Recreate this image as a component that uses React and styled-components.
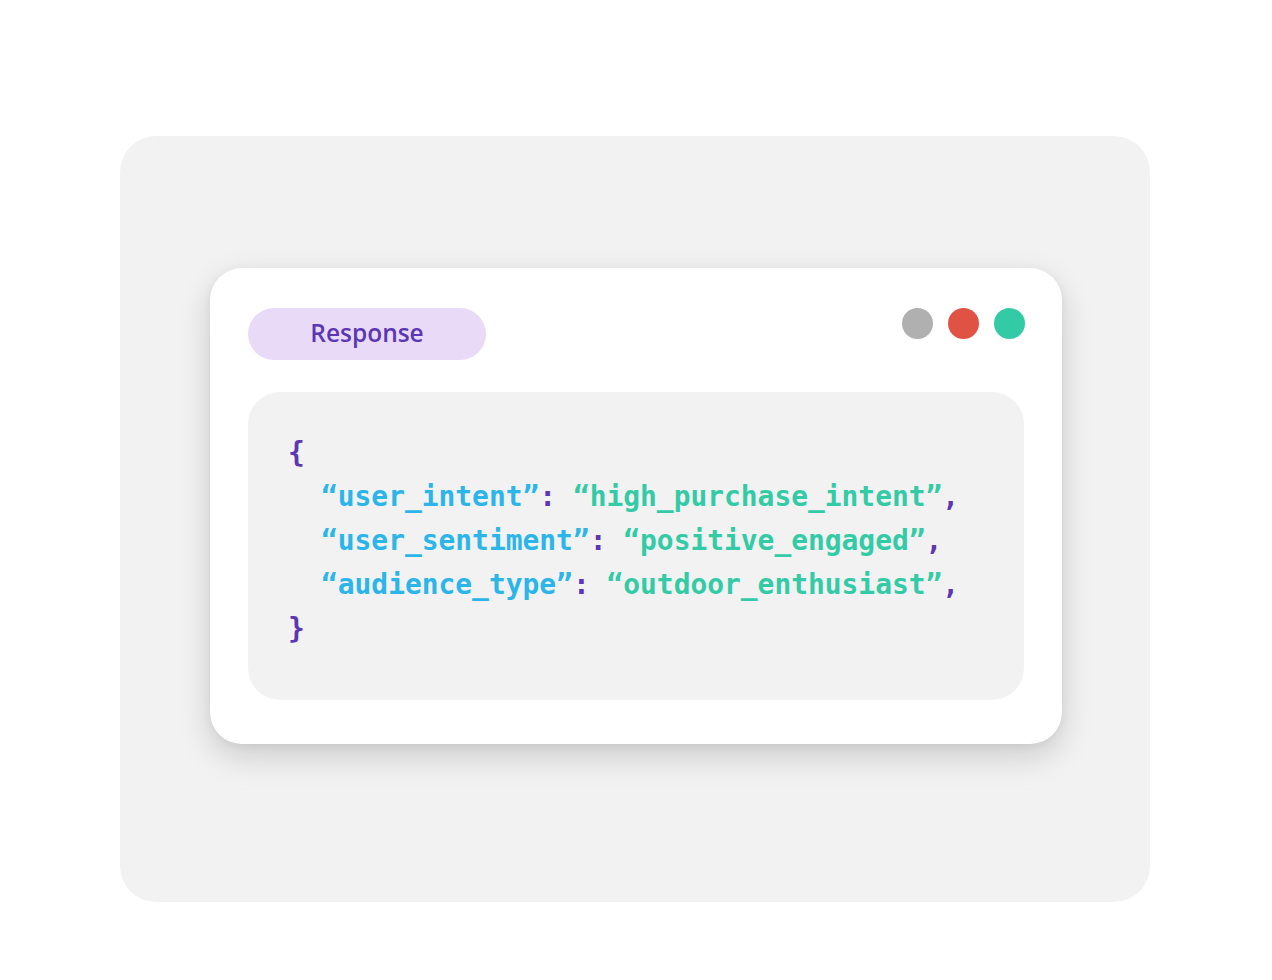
import styled, { createGlobalStyle } from "styled-components";

const GlobalStyle = createGlobalStyle`
  html, body {
    margin: 0;
    padding: 0;
    background: #ffffff;
  }
  * {
    box-sizing: border-box;
  }
`;

const lines = [
  { key: "user_intent", value: "high_purchase_intent" },
  { key: "user_sentiment", value: "positive_engaged" },
  { key: "audience_type", value: "outdoor_enthusiast" },
];

export default function App() {
  return (
    <>
      <GlobalStyle />
      <Page>
        <Panel>
          <Card>
            <Header>
              <Pill>Response</Pill>
              <Dots>
                <Dot color="#b0b0b0" />
                <Dot color="#e05344" />
                <Dot color="#33cba6" />
              </Dots>
            </Header>
            <CodeBox>
              <Line>
                <Punct>{"{"}</Punct>
              </Line>
              {lines.map((l) => (
                <Line key={l.key} indent>
                  <Key>{`“${l.key}”`}</Key>
                  <Punct>: </Punct>
                  <Value>{`“${l.value}”`}</Value>
                  <Punct>,</Punct>
                </Line>
              ))}
              <Line>
                <Punct>{"}"}</Punct>
              </Line>
            </CodeBox>
          </Card>
        </Panel>
      </Page>
    </>
  );
}

const Page = styled.div`
  width: 1272px;
  height: 980px;
  padding: 136px 122px 78px 120px;
`;

const Panel = styled.div`
  width: 1030px;
  height: 766px;
  background: #f2f2f2;
  border-radius: 36px;
  padding: 132px 88px 0 90px;
`;

const Card = styled.div`
  width: 852px;
  height: 476px;
  background: #ffffff;
  border-radius: 32px;
  padding: 40px 38px 44px 38px;
  box-shadow: 0 12px 32px rgba(0, 0, 0, 0.16), 0 2px 8px rgba(0, 0, 0, 0.05);
  display: flex;
  flex-direction: column;
  gap: 32px;
`;

const Header = styled.div`
  display: flex;
  justify-content: space-between;
  align-items: flex-start;
`;

const Pill = styled.div`
  width: 238px;
  height: 52px;
  border-radius: 26px;
  background: #e9dbf8;
  color: #5b36b5;
  font-family: "Open Sans", "Noto Sans", sans-serif;
  font-weight: 600;
  font-size: 24.5px;
  padding-bottom: 3px;
  display: flex;
  align-items: center;
  justify-content: center;
`;

const Dots = styled.div`
  display: flex;
  gap: 15px;
  margin-right: -1px;
`;

const Dot = styled.span`
  width: 31px;
  height: 31px;
  border-radius: 50%;
  background: ${(p) => p.color};
`;

const CodeBox = styled.div`
  flex: 1;
  background: #f2f2f2;
  border-radius: 32px;
  padding: 39px 40px 37px;
  font-family: "DejaVu Sans Mono", "Liberation Mono", monospace;
  font-weight: bold;
  font-size: 27.9px;
  line-height: 44px;
`;

const Line = styled.div`
  white-space: pre;
  padding-left: ${(p) => (p.indent ? "33px" : "0")};
`;

const Punct = styled.span`
  color: #5b36b5;
`;

const Key = styled.span`
  color: #2bb5e8;
`;

const Value = styled.span`
  color: #33cba6;
`;
